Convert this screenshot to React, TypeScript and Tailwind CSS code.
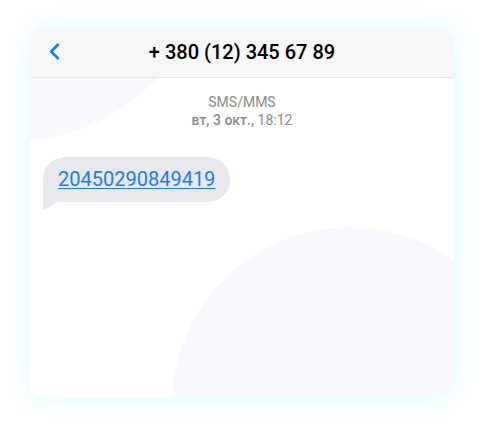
import { ChevronLeft } from 'lucide-react'

const font = { fontFamily: 'Roboto, "Noto Sans", sans-serif' }

function Bubble({ text }: { text: string }) {
  return (
    <div className="relative">
      <div className="rounded-[22px] rounded-bl-none bg-[#e8e8ee] pl-[15px] pr-[15px] py-[9px]">
        <a
          href="#"
          className="text-[20px] leading-[27px] text-[#1a7ef0] underline decoration-1 underline-offset-2"
        >
          {text}
        </a>
      </div>
      <svg
        className="absolute left-0 top-full"
        width="14"
        height="9"
        viewBox="0 0 14 9"
      >
        <path d="M0 0 H14 L0 9 Z" fill="#e8e8ee" />
      </svg>
    </div>
  )
}

export default function App() {
  return (
    <div className="min-h-screen bg-white pt-[27px] pl-[30px]" style={font}>
      <div className="relative w-[424px] h-[371px] overflow-hidden rounded-2xl bg-white shadow-[0_0_28px_rgba(0,215,255,0.15)]">
        {/* background blobs */}
        <div className="absolute left-[-222px] top-[-289px] w-[404px] h-[404px] rounded-full bg-[#f8f7fd]" />
        <div className="absolute left-[142px] top-[200px] w-[356px] h-[356px] rounded-full bg-[#f8f7fd]" />

        <div className="relative flex h-[51px] items-center border-b border-[#e6e6e6] bg-[#f6f6f6]">
          <button className="absolute left-[11px] top-[11px] text-[#1a7ef0]">
            <ChevronLeft size={27} strokeWidth={2.4} />
          </button>
          <h1 className="w-full text-center text-[20px] font-medium text-black">
            + 380 (12) 345 67 89
          </h1>
        </div>

        <div className="relative flex flex-col items-start px-[13px]">
          <div className="mt-[15px] flex flex-col items-center self-stretch text-[14px] leading-[18px] text-[#8a8a8a]">
            <span>SMS/MMS</span>
            <span>
              <span className="font-medium">вт, 3 окт.,</span> 18:12
            </span>
          </div>
          <div className="mt-[28px]">
            <Bubble text="20450290849419" />
          </div>
        </div>
      </div>
    </div>
  )
}
